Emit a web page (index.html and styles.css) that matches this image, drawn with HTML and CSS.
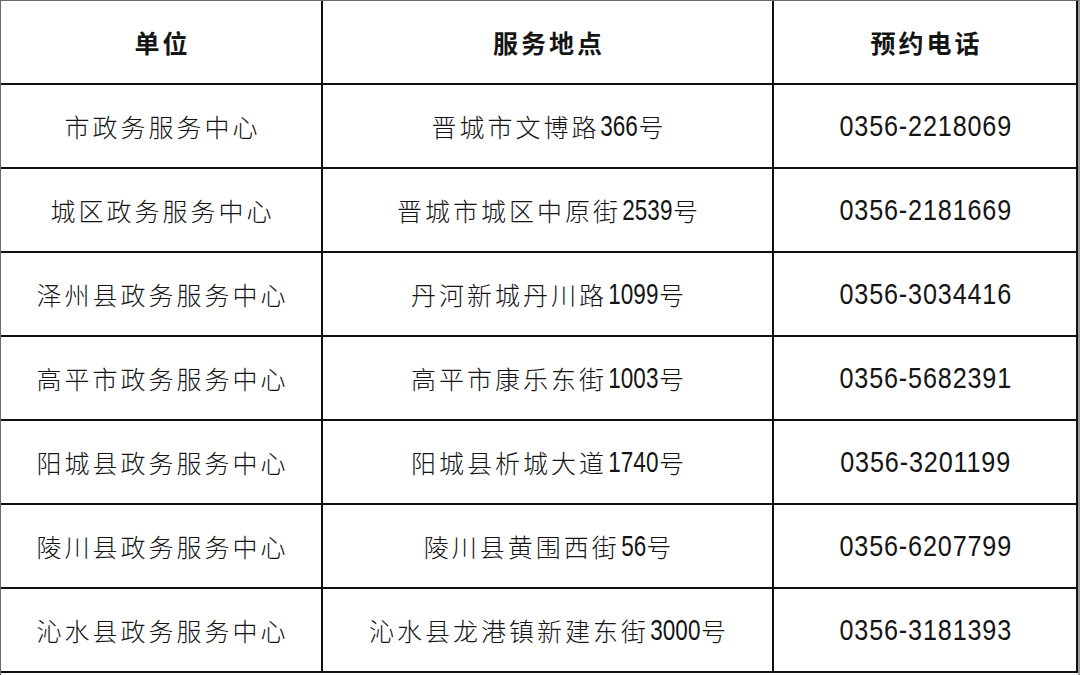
FILE: index.html
```html
<!DOCTYPE html>
<html lang="zh-CN">
<head>
<meta charset="utf-8">
<title>政务服务中心</title>
<link rel="stylesheet" href="styles.css">
</head>
<body>
<div class="table">
  <div class="cell head">单位</div>
  <div class="cell head">服务地点</div>
  <div class="cell head">预约电话</div>

  <div class="cell">市政务服务中心</div>
  <div class="cell">晋城市文博路<span class="num n3">366</span>号</div>
  <div class="cell phone"><span class="tel">0356-2218069</span></div>

  <div class="cell">城区政务服务中心</div>
  <div class="cell">晋城市城区中原街<span class="num n4">2539</span>号</div>
  <div class="cell phone"><span class="tel">0356-2181669</span></div>

  <div class="cell">泽州县政务服务中心</div>
  <div class="cell">丹河新城丹川路<span class="num n4">1099</span>号</div>
  <div class="cell phone"><span class="tel">0356-3034416</span></div>

  <div class="cell">高平市政务服务中心</div>
  <div class="cell">高平市康乐东街<span class="num n4">1003</span>号</div>
  <div class="cell phone"><span class="tel">0356-5682391</span></div>

  <div class="cell">阳城县政务服务中心</div>
  <div class="cell">阳城县析城大道<span class="num n4">1740</span>号</div>
  <div class="cell phone"><span class="tel">0356-3201199</span></div>

  <div class="cell">陵川县政务服务中心</div>
  <div class="cell">陵川县黄围西街<span class="num n2">56</span>号</div>
  <div class="cell phone"><span class="tel">0356-6207799</span></div>

  <div class="cell">沁水县政务服务中心</div>
  <div class="cell">沁水县龙港镇新建东街<span class="num n4">3000</span>号</div>
  <div class="cell phone"><span class="tel">0356-3181393</span></div>
</div>
</body>
</html>
```
FILE: styles.css
```css
html, body {
  margin: 0;
  padding: 0;
  background: #ffffff;
}

.table {
  width: 1080px;
  height: 675px;
  box-sizing: border-box;
  display: grid;
  grid-template-columns: 322px 451px 304px;
  grid-template-rows: repeat(8, 84px);
  align-content: start;
  border-left: 1px solid #6a6a6a;
  border-top: 1px solid #6a6a6a;
  border-right: 2px solid #9a9a9a;
  color: #151515;
}

.cell {
  box-sizing: border-box;
  border-right: 2px solid #111;
  border-bottom: 2px solid #111;
  display: flex;
  align-items: center;
  justify-content: center;
  font-family: "Noto Sans CJK SC", sans-serif;
  font-weight: 300;
  font-size: 25px;
  letter-spacing: 3px;
  padding-left: 3px;
  white-space: nowrap;
}

.head {
  font-weight: 700;
}

.num {
  display: inline-block;
  font-family: "Liberation Sans", sans-serif;
  font-weight: 400;
  font-size: 30px;
  letter-spacing: 0;
  transform: scaleX(0.75);
  transform-origin: center;
}

.n2 { margin: 0 -4px 0 -3px; }
.n3 { margin: 0 -6px 0 -5px; }
.n4 { margin: 0 -8px 0 -7px; }

.phone {
  padding-left: 2px;
}

.tel {
  display: inline-block;
  font-family: "Liberation Sans", sans-serif;
  font-weight: 400;
  font-size: 30px;
  letter-spacing: 1px;
  transform: scaleX(0.84);
  transform-origin: center;
}
```
